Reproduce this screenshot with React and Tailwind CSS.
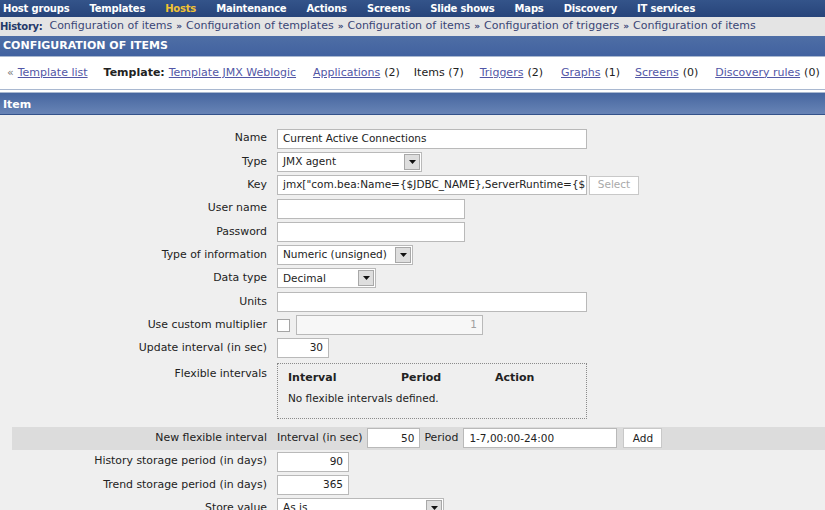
import React from 'react';

const menu = ['Host groups', 'Templates', 'Hosts', 'Maintenance', 'Actions', 'Screens', 'Slide shows', 'Maps', 'Discovery', 'IT services'];
const history = ['Configuration of items', 'Configuration of templates', 'Configuration of items', 'Configuration of triggers', 'Configuration of items'];

function Input({ w, value = '', right, disabled }) {
  return (
    <div
      className={`shrink-0 h-[20px] border border-[#b9b9b9] flex items-center px-[5px] whitespace-nowrap overflow-hidden text-[10.5px] ${w} ${right ? 'justify-end' : ''} ${disabled ? 'bg-[#f7f7f7] text-[#a0a0a0]' : 'bg-white text-[#222]'}`}
    >
      {value}
    </div>
  );
}

function Select({ w, value }) {
  return (
    <div className={`shrink-0 h-[20px] border border-[#b9b9b9] bg-white flex items-center pl-[5px] pr-[1px] text-[10.5px] ${w}`}>
      <span className="flex-1 text-[#222]">{value}</span>
      <span className="w-[16px] h-[16px] border border-[#a8a8a8] bg-[#dedede] flex items-center justify-center">
        <svg width="7" height="4" viewBox="0 0 7 4"><path d="M0 0h7L3.5 4z" fill="#111" /></svg>
      </span>
    </div>
  );
}

function Row({ label, children, className = '' }) {
  return (
    <div className={`flex items-center h-[23.3px] ${className}`}>
      <div className="shrink-0 w-[265px] pr-[10px] text-right text-[#222] whitespace-nowrap">{label}</div>
      <div className="flex items-center">{children}</div>
    </div>
  );
}

export default function App() {
  return (
    <div className="w-[825px] h-[510px] overflow-hidden bg-[#efefef] font-['DejaVu_Sans',sans-serif]">
      <div className="h-[17px] bg-gradient-to-b from-[#34548a] to-[#27447a] flex items-center gap-[20px] pl-[3px] text-[10px] font-bold tracking-[-0.2px] text-white whitespace-nowrap">
        {menu.map((m) => (
          <span key={m} className={m === 'Hosts' ? 'text-[#f2c332]' : ''}>{m}</span>
        ))}
      </div>
      <div className="h-[19px] bg-[#e4e4e4] flex items-center text-[11px] text-[#3a4676] whitespace-nowrap">
        <span className="font-bold text-[#243a6a] text-[10px] tracking-[-0.3px] mr-[7px]">History:</span>
        {history.map((h, i) => (
          <span key={i} className="flex items-center">
            {i > 0 && <span className="mx-[4px] text-[9px] font-bold">»</span>}
            <span>{h}</span>
          </span>
        ))}
      </div>
      <div className="h-[20px] bg-gradient-to-b from-[#4e6ea5] to-[#4262a0] flex items-center pl-[3px] text-[11px] font-bold text-white">
        CONFIGURATION OF ITEMS
      </div>
      <div className="border-t border-[#a9b8d0] bg-white h-[33px] flex items-center text-[11px] text-[#222] whitespace-nowrap pl-[7px]">
        <span className="text-[#777] mr-[4px]">«</span>
        <span className="underline text-[#5256a6] mr-[16px]">Template list</span>
        <span className="font-bold mr-[4px]">Template:</span>
        <span className="underline text-[#5256a6] mr-[17px]">Template JMX Weblogic</span>
        <span className="underline text-[#5256a6]">Applications</span>
        <span className="ml-[4px] mr-[14px]">(2)</span>
        <span className="mr-[16px]">Items (7)</span>
        <span className="underline text-[#5256a6]">Triggers</span>
        <span className="ml-[4px] mr-[18px]">(2)</span>
        <span className="underline text-[#5256a6]">Graphs</span>
        <span className="ml-[4px] mr-[15px]">(1)</span>
        <span className="underline text-[#5256a6]">Screens</span>
        <span className="ml-[4px] mr-[17px]">(0)</span>
        <span className="underline text-[#5256a6]">Discovery rules</span>
        <span className="ml-[4px]">(0)</span>
      </div>
      <div className="border-t border-[#a9b8d0] h-[3px] bg-white"></div>
      <div className="border-t border-[#a9b8d0] h-[23px] bg-gradient-to-b from-[#46669f] to-[#6884b6] border-b border-b-[#34528a] flex items-center pl-[3px] pt-[4px] text-[11px] font-bold text-white">
        Item
      </div>

      <div className="pl-[12px] pt-[12px] text-[10.9px]">
        <Row label="Name"><Input w="w-[310px]" value="Current Active Connections" /></Row>
        <Row label="Type"><Select w="w-[145px]" value="JMX agent" /></Row>
        <Row label="Key">
          <Input w="w-[310px]" value={'jmx["com.bea:Name={$JDBC_NAME},ServerRuntime={$'} />
          <div className="ml-[2px] w-[50px] h-[19px] border border-[#c8c8c8] bg-white text-[#a9a9a9] text-[10.5px] flex items-center justify-center">Select</div>
        </Row>
        <Row label="User name"><Input w="w-[188px]" /></Row>
        <Row label="Password"><Input w="w-[188px]" /></Row>
        <Row label="Type of information"><Select w="w-[136px]" value="Numeric (unsigned)" /></Row>
        <Row label="Data type"><Select w="w-[99px]" value="Decimal" /></Row>
        <Row label="Units"><Input w="w-[310px]" /></Row>
        <Row label="Use custom multiplier">
          <span className="w-[13px] h-[13px] border border-[#a5a5a5] bg-white mr-[6px]"></span>
          <Input w="w-[187px]" value="1" right disabled />
        </Row>
        <Row label="Update interval (in sec)"><Input w="w-[52px]" value="30" right /></Row>

        <div className="flex items-start h-[67px]">
          <div className="shrink-0 w-[265px] pr-[10px] text-right text-[#222] pt-[6px]">Flexible intervals</div>
          <div className="mt-[3px] w-[310px] h-[56px] border border-dotted border-[#8a8a8a] px-[10px] pt-[6px] text-[10.5px]">
            <div className="flex font-bold text-[11px] text-[#222]">
              <span className="w-[113px]">Interval</span>
              <span className="w-[94px]">Period</span>
              <span>Action</span>
            </div>
            <div className="mt-[5px] text-[#222]">No flexible intervals defined.</div>
          </div>
        </div>

        <Row label="New flexible interval" className="bg-[#dcdcdc] !h-[23px]">
          <span className="text-[#222] mr-[5px] whitespace-nowrap">Interval (in sec)</span>
          <Input w="w-[53px]" value="50" right />
          <span className="text-[#222] ml-[4px] mr-[5px]">Period</span>
          <Input w="w-[154px]" value="1-7,00:00-24:00" />
          <div className="ml-[6px] w-[39px] h-[20px] border border-[#c8c8c8] bg-white text-[#222] text-[10.5px] flex items-center justify-center">Add</div>
        </Row>
        <Row label="History storage period (in days)"><Input w="w-[72px]" value="90" right /></Row>
        <Row label="Trend storage period (in days)"><Input w="w-[72px]" value="365" right /></Row>
        <Row label="Store value"><Select w="w-[167px]" value="As is" /></Row>
      </div>
    </div>
  );
}
